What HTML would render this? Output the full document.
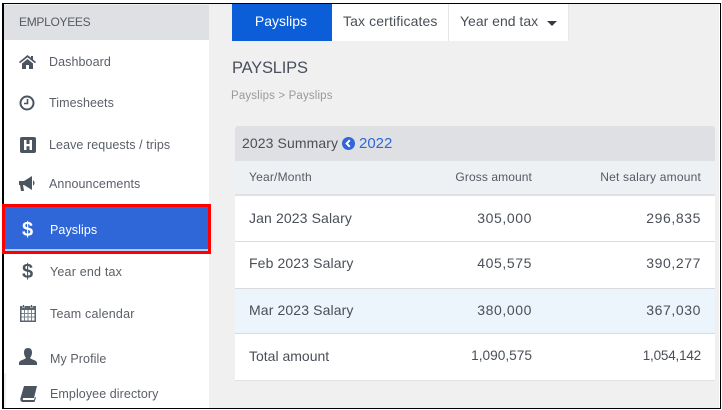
<!DOCTYPE html>
<html><head><meta charset="utf-8"><style>
html,body{margin:0;padding:0}
body{width:722px;height:410px;overflow:hidden;background:#fff;position:relative;font-family:"Liberation Sans",sans-serif;color:#4a4f57}
div,svg{position:absolute}
.t{white-space:nowrap;line-height:16px}
.m{font-size:12.5px;color:#5a5f67;letter-spacing:.08px}
.r{text-align:right;width:120px}
.s{font-size:14px;color:#4a4f57;letter-spacing:.12px}
.n{letter-spacing:.6px}
</style></head><body>
<div style="left:3px;top:4px;width:716px;height:404px;background:#f0f0f0"></div>
<div style="left:4px;top:5px;width:205px;height:403px;background:#fff"></div>
<div style="left:4px;top:5px;width:205px;height:35px;background:#dfe0e3"></div>
<div class="t" style="left:19px;top:14px;font-size:12px;color:#555a62;letter-spacing:-.3px">EMPLOYEES</div>

<svg style="left:19px;top:55px" width="17" height="14" viewBox="0 0 17 14"><path d="M8.500 0L0 7l1 1.200 7.500-6 7.500 6L17 7l-3-2.500V1h-2v1.800zM3 8.500V14h4v-4h3v4h4V8.500L8.500 4z" fill="#4a5560"/></svg>
<div class="t m" style="left:49px;top:54px">Dashboard</div>
<svg style="left:19px;top:95px" width="16" height="16" viewBox="0 0 16 16"><circle cx="8" cy="8" r="6.500" fill="none" stroke="#4a5560" stroke-width="2"/><path d="M8.500 4v4.500H5" fill="none" stroke="#4a5560" stroke-width="1.600"/></svg>
<div class="t m" style="left:49px;top:95px">Timesheets</div>
<svg style="left:20px;top:137px" width="16" height="16" viewBox="0 0 16 16"><path fill-rule="evenodd" d="M2 0h12a2 2 0 0 1 2 2v12a2 2 0 0 1-2 2H2a2 2 0 0 1-2-2V2a2 2 0 0 1 2-2zM4 3v10h2.500V9.300h3V13H12V3H9.500v4h-3V3z" fill="#4a5560"/></svg>
<div class="t m" style="left:49px;top:137px">Leave requests / trips</div>
<svg style="left:19px;top:175px" width="18" height="17" viewBox="0 0 18 17"><path d="M0 6h5l8-5v14L5 10H4l1 6H2L1 10H0zM14 5.500c2 .5 2 4.500 0 5z" fill="#4a5560"/></svg>
<div class="t m" style="left:49px;top:176px">Announcements</div>

<div style="left:5px;top:207px;width:203px;height:42px;background:#2f66d8"></div>
<div style="left:5px;top:249px;width:203px;height:2px;background:#b9cdf2"></div>
<div class="t" style="left:22px;top:219px;font-size:20px;font-weight:bold;color:#fff;line-height:22px">$</div>
<div class="t m" style="left:50px;top:222px;color:#fff">Payslips</div>

<div class="t" style="left:22px;top:261px;font-size:20px;font-weight:bold;color:#4a5560;line-height:22px">$</div>
<div class="t m" style="left:50px;top:264px;letter-spacing:.2px">Year end tax</div>
<svg style="left:19px;top:304px" width="18" height="18" viewBox="0 0 18 18"><path fill-rule="evenodd" d="M1 2h2.500v2h2V2h6v2h2V2H17v16H1zM2.500 6v10.500h13V6z" fill="#5a6570"/><path d="M5.500 6v10.500M9 6v10.500M12.500 6v10.500M2.500 9.500h13M2.500 13h13" stroke="#7a848e" stroke-width="1"/><path d="M4.500 1v2.500M12.500 1v2.500" stroke="#4a5560" stroke-width="1.200"/></svg>
<div class="t m" style="left:50px;top:306px;letter-spacing:.2px">Team calendar</div>
<svg style="left:19px;top:348px" width="18" height="17" viewBox="0 0 18 17"><path d="M9 0c3 0 4 2 4 4.500S11.800 9 11 10c1 1.500 7 2 7 5v2H0v-2c0-3 6-3.500 7-5-.8-1-2-3-2-5.500S6 0 9 0z" fill="#4a5560"/></svg>
<div class="t m" style="left:50px;top:351px">My Profile</div>
<div style="left:4px;top:373px;width:2px;height:35px;background:#f0f0f0"></div>
<svg style="left:20px;top:386px" width="17" height="16" viewBox="0 0 17 16"><path d="M4 0h13l-3 12H3.500C2.500 12 2.500 14 3.500 14H14l1-3 1 .5-1.500 4.500H3C.5 16 0 14 .5 12z" fill="#4a5560"/></svg>
<div class="t m" style="left:50px;top:386px">Employee directory</div>

<div style="left:232px;top:4px;width:100px;height:37px;background:#0b5ed7"></div>
<div style="left:332px;top:4px;width:237px;height:37px;background:#fff"></div>
<div style="left:448px;top:4px;width:1px;height:37px;background:#e6e6e6"></div>
<div style="left:568px;top:4px;width:1px;height:37px;background:#e6e6e6"></div>
<div class="t" style="left:231px;top:13px;width:100px;text-align:center;font-size:14px;color:#fff">Payslips</div>
<div class="t s" style="left:343px;top:13px">Tax certificates</div>
<div class="t s" style="left:460px;top:13px;letter-spacing:0">Year end tax</div>
<div style="left:547px;top:21px;width:0;height:0;border:5px solid transparent;border-top:5px solid #333a44;border-bottom:0"></div>

<div class="t" style="left:232px;top:58px;font-size:16.500px;line-height:20px;color:#4a4f5c;letter-spacing:-.2px">PAYSLIPS</div>
<div class="t" style="left:231px;top:88px;font-size:11.500px;color:#9a9a9a;letter-spacing:.15px">Payslips &gt; Payslips</div>

<div style="left:235px;top:126px;width:480px;height:35px;background:#dfe0e3;border-radius:3px 3px 0 0"></div>
<div class="t" style="left:242px;top:135px;font-size:14px;color:#4a4f57;letter-spacing:.1px">2023 Summary</div>
<svg style="left:342px;top:137px" width="13" height="13" viewBox="0 0 13 13"><circle cx="6.500" cy="6.500" r="6.500" fill="#2f66d8"/><path d="M7.800 3.200L4.600 6.500l3.200 3.300" fill="none" stroke="#fff" stroke-width="2"/></svg>
<div class="t" style="left:359px;top:136px;font-size:15px;color:#2f66d8">2022</div>

<div style="left:235px;top:161px;width:480px;height:33px;background:#eef1f4"></div>
<div style="left:235px;top:194px;width:480px;height:2px;background:#dfe1e4"></div>
<div style="left:235px;top:196px;width:480px;height:184px;background:#fff"></div>
<div style="left:235px;top:241px;width:480px;height:1px;background:#d9dbde"></div>
<div style="left:235px;top:288px;width:480px;height:44px;background:#ecf4fc;border-top:1px solid #d9dbde;border-bottom:1px solid #d9dbde"></div>
<div style="left:235px;top:380px;width:480px;height:1px;background:#dfe1e4"></div>

<div class="t" style="left:249px;top:169px;font-size:12px;color:#555a62;letter-spacing:.2px">Year/Month</div>
<div class="t r" style="left:412px;top:169px;font-size:12px;color:#555a62;letter-spacing:.1px">Gross amount</div>
<div class="t r" style="left:581px;top:169px;font-size:12px;color:#555a62;letter-spacing:.2px">Net salary amount</div>

<div class="t s" style="left:249px;top:210px">Jan 2023 Salary</div>
<div class="t s r n" style="left:412px;top:210px">305,000</div>
<div class="t s r n" style="left:581px;top:210px">296,835</div>
<div class="t s" style="left:249px;top:255px">Feb 2023 Salary</div>
<div class="t s r n" style="left:412px;top:255px">405,575</div>
<div class="t s r n" style="left:581px;top:255px">390,277</div>
<div class="t s" style="left:249px;top:302px">Mar 2023 Salary</div>
<div class="t s r n" style="left:412px;top:302px">380,000</div>
<div class="t s r n" style="left:581px;top:302px">367,030</div>
<div class="t s" style="left:249px;top:348px;letter-spacing:0">Total amount</div>
<div class="t s r" style="left:412px;top:348px;font-size:13.700px;letter-spacing:0">1,090,575</div>
<div class="t s r" style="left:581px;top:348px;font-size:13.500px;letter-spacing:-.2px">1,054,142</div>

<div style="left:2px;top:3px;width:716px;height:404px;border:1px solid #000;border-left:2px solid #000"></div>
<div style="left:2px;top:204px;width:203px;height:44px;border:3px solid #f00"></div>
</body></html>
